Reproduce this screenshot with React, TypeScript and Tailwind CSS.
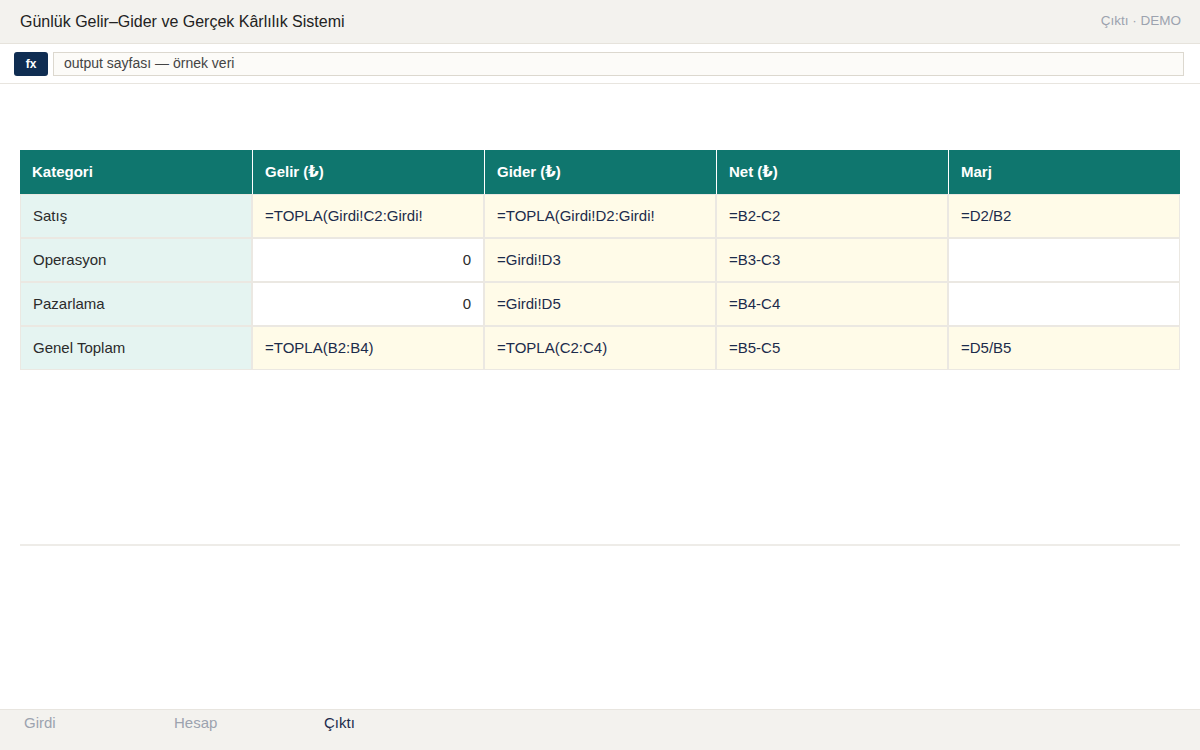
const headers = ["Kategori", "Gelir (₺)", "Gider (₺)", "Net (₺)", "Marj"];

type Cell = { v: string; kind: "cat" | "f" | "in" };

const rows: Cell[][] = [
  [
    { v: "Satış", kind: "cat" },
    { v: "=TOPLA(Girdi!C2:Girdi!", kind: "f" },
    { v: "=TOPLA(Girdi!D2:Girdi!", kind: "f" },
    { v: "=B2-C2", kind: "f" },
    { v: "=D2/B2", kind: "f" },
  ],
  [
    { v: "Operasyon", kind: "cat" },
    { v: "0", kind: "in" },
    { v: "=Girdi!D3", kind: "f" },
    { v: "=B3-C3", kind: "f" },
    { v: "", kind: "in" },
  ],
  [
    { v: "Pazarlama", kind: "cat" },
    { v: "0", kind: "in" },
    { v: "=Girdi!D5", kind: "f" },
    { v: "=B4-C4", kind: "f" },
    { v: "", kind: "in" },
  ],
  [
    { v: "Genel Toplam", kind: "cat" },
    { v: "=TOPLA(B2:B4)", kind: "f" },
    { v: "=TOPLA(C2:C4)", kind: "f" },
    { v: "=B5-C5", kind: "f" },
    { v: "=D5/B5", kind: "f" },
  ],
];

const cellStyle: Record<Cell["kind"], string> = {
  cat: "bg-[#e5f4f1] text-[#2b2b2b] justify-start",
  f: "bg-[#fffbe8] text-[#1c2b4b] justify-start",
  in: "bg-white text-[#2b2b2b] justify-end",
};

const tabs = ["Girdi", "Hesap", "Çıktı"];

export default function App() {
  return (
    <div
      className="flex h-[750px] w-[1200px] flex-col bg-white"
      style={{ fontFamily: '"Liberation Sans", Arial, "DejaVu Sans", sans-serif' }}
    >
      {/* title bar */}
      <div className="flex h-[44px] items-center justify-between border-b border-[#e6e3dc] bg-[#f3f2ee] pl-5 pr-[19px]">
        <h1 className="text-[16px] text-[#222]">Günlük Gelir–Gider ve Gerçek Kârlılık Sistemi</h1>
        <span className="text-[13.5px] text-[#9ca3af]">Çıktı · DEMO</span>
      </div>

      {/* formula bar */}
      <div className="flex h-[40px] items-center gap-[5px] border-b border-[#e8e5df] pl-[14px] pr-[16px]">
        <div className="flex h-6 w-[34px] items-center justify-center rounded-[3px] bg-[#0f2d52] text-[12px] font-bold text-white">
          fx
        </div>
        <div className="flex h-6 flex-1 items-center border border-[#dcd8cf] bg-[#fcfbf8] px-[10px] text-[14px] text-[#444]">
          output sayfası — örnek veri
        </div>
      </div>

      {/* sheet */}
      <div className="flex flex-1 flex-col px-5 pt-[66px]">
        <div className="grid grid-cols-5">
          {headers.map((h, i) => (
            <div
              key={h}
              className={`flex h-[44px] items-center bg-[#0f766e] px-3 text-[15px] font-semibold text-white ${
                i > 0 ? "border-l border-white" : ""
              }`}
            >
              {h}
            </div>
          ))}
          {rows.map((r, ri) =>
            r.map((c, ci) => (
              <div
                key={`${ri}-${ci}`}
                className={`flex h-[44px] items-center whitespace-nowrap overflow-hidden border border-[#ebe8e2] px-3 text-[15px] ${cellStyle[c.kind]}`}
              >
                {c.v}
              </div>
            ))
          )}
        </div>
        <div className="mt-[174px] h-[2px] bg-[#eeece8]" />
      </div>

      {/* sheet tabs */}
      <div className="flex h-[41px] border-t border-[#e8e5df] bg-[#f3f2ee]">
        {tabs.map((t) => (
          <div
            key={t}
            className={`w-[150px] pl-6 pt-[2px] text-[15px] ${
              t === "Çıktı" ? "text-[#1c2b4b]" : "text-[#9ca3af]"
            }`}
          >
            {t}
          </div>
        ))}
      </div>
    </div>
  );
}
